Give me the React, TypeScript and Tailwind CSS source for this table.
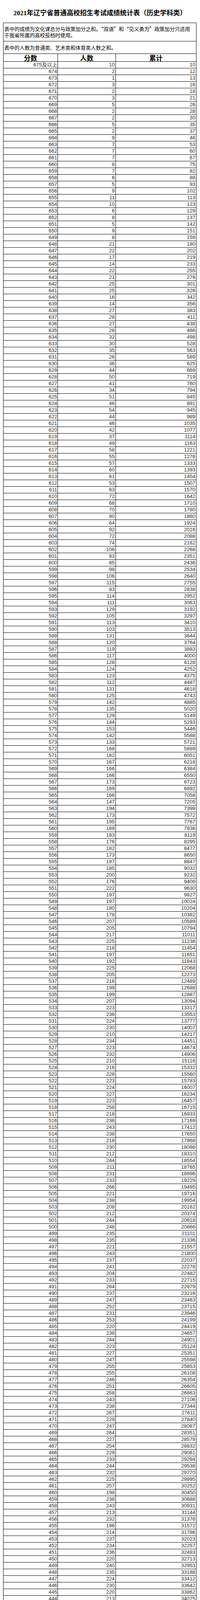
import React from 'react';

// 各分数段人数（675及以上 → 411）
const counts = [
  10, 2, 1, 3, 2, 3, 5, 2, 2, 5,
  2, 9, 7, 7, 7, 8, 7, 6, 5, 9,
  11, 10, 6, 8, 5, 9, 8, 21, 22, 17,
  14, 22, 21, 25, 25, 16, 14, 27, 28, 27,
  28, 32, 30, 35, 26, 36, 44, 50, 41, 34,
  51, 46, 54, 44, 46, 42, 37, 49, 58, 55,
  57, 60, 61, 53, 63, 72, 68, 70, 80, 64,
  92, 72, 74, 106, 83, 85, 98, 106, 115, 83,
  114, 111, 129, 105, 113, 103, 131, 120, 119, 117,
  128, 124, 123, 112, 131, 125, 142, 135, 129, 144,
  153, 142, 133, 168, 162, 167, 166, 166, 173, 169,
  166, 147, 194, 173, 195, 169, 183, 176, 182, 173,
  197, 185, 200, 176, 222, 197, 197, 180, 178, 207,
  205, 217, 225, 218, 197, 192, 225, 205, 216, 199,
  199, 207, 223, 236, 224, 230, 210, 234, 223, 232,
  210, 216, 228, 223, 224, 227, 223, 258, 218, 236,
  243, 238, 218, 230, 212, 244, 211, 231, 233, 266,
  221, 238, 208, 212, 244, 248, 235, 235, 221, 243,
  237, 241, 204, 233, 264, 237, 247, 252, 231, 253,
  220, 238, 244, 223, 227, 247, 255, 255, 246, 251,
  258, 243, 238, 267, 229, 247, 264, 227, 254, 229,
  233, 244, 232, 225, 257, 198, 238, 243, 213, 232,
  196, 214, 237, 234, 236, 220, 240, 235, 224, 230,
  220, 213, 222, 230, 243, 207, 224, 220, 202, 210,
  224, 221, 228, 221, 208, 219, 214, 200, 212, 200,
  205, 196, 217, 224, 205, 233, 224, 219, 231, 174,
  203, 228, 206, 220, 203,
];

let running = 0;
const rows = counts.map((c, i) => {
  running += c;
  return { score: i === 0 ? '675及以上' : String(675 - i), count: c, total: running };
});

const cjk = "font-['Noto_Sans_CJK_SC',sans-serif]";
const num = "font-['Liberation_Sans','Noto_Sans_CJK_SC',sans-serif]";

const WeChatMark = () => (
  <svg width="18" height="14" viewBox="0 0 18 14" fill="none" stroke="#b5b5b5" strokeWidth="1.1">
    <ellipse cx="7" cy="6" rx="6" ry="4.8" />
    <ellipse cx="12" cy="8.5" rx="4.8" ry="3.8" fill="white" />
    <circle cx="5" cy="5" r="0.6" fill="#b5b5b5" />
    <circle cx="9" cy="5" r="0.6" fill="#b5b5b5" />
  </svg>
);

export default function App() {
  return (
    <div className="relative w-[511px] bg-white text-black">
      <h1 className={`h-[58px] pt-[24px] text-center text-[17px] leading-[20px] font-bold ${"font-['Liberation_Serif','Noto_Sans_CJK_SC',serif]"}`}>
        2021年辽宁省普通高校招生考试成绩统计表（历史学科类）
      </h1>

      <div className="ml-[8px] w-[494px] border-l border-t border-black">
        <div className={`h-[47px] border-r border-b border-black pl-[2px] pt-[7px] text-[13px] leading-[16px] ${cjk}`}>
          表中的成绩为文化课总分与政策加分之和。“双语”和“见义勇为”政策加分只适用
          <br />
          于我省所属的高校投档时使用。
        </div>
        <div className={`h-[32px] border-r border-b border-black pl-[2px] pt-[8px] text-[13px] leading-[16px] ${cjk}`}>
          表中的人数为普通类、艺术类和体育类人数之和。
        </div>

        <div className={`grid grid-cols-[139px_148px_206px] text-[17px] font-bold leading-[19px] ${cjk}`}>
          <div className="h-[20px] border-r border-b border-black text-center">分数</div>
          <div className="h-[20px] border-r border-b border-black text-center">人数</div>
          <div className="h-[20px] border-r border-b border-black text-center">累计</div>
        </div>

        {rows.map((r) => (
          <div key={r.score} className={`grid grid-cols-[139px_148px_206px] text-[13px] leading-[16px] text-[#2a2a2a] ${num}`}>
            <div className="h-[17px] border-r border-b border-black pr-px text-right">{r.score}</div>
            <div className="h-[17px] border-r border-b border-black pr-[2px] text-right">{r.count}</div>
            <div className="h-[17px] border-r border-b border-black pr-[2px] text-right">{r.total}</div>
          </div>
        ))}
      </div>

      {/* 水印 */}
      <div className="absolute left-[421px] top-[4629px] flex items-center gap-[4px]">
        <WeChatMark />
        <span className={`text-[14px] leading-[16px] text-[#9a9a9a] bg-white/60 ${cjk}`}>海燕师说</span>
      </div>
    </div>
  );
}
